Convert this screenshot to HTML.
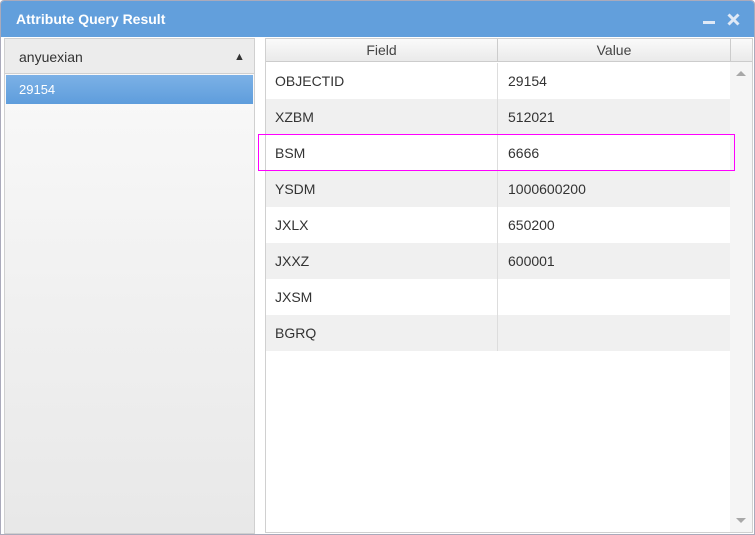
<html><head><style>
body{margin:0;width:755px;height:535px;overflow:hidden;background:#fff;font-family:"Liberation Sans",sans-serif;}
.win{position:absolute;left:0;top:0;width:753px;height:533px;border:1px solid #aab;border-radius:4px 4px 0 0;background:#fff;}
.title{position:absolute;left:0;top:0;width:753px;height:36px;background:#629fdc;border-radius:3px 3px 0 0;}
.title span{position:absolute;left:15px;top:10px;color:#fff;font-weight:bold;font-size:14px;}
.lp{position:absolute;left:3px;top:37px;width:249px;height:494px;border:1px solid #d0d0d0;background:linear-gradient(#fafafa,#e8e8e8);}
.lh{height:34px;background:#ececec;border-bottom:1px solid #d0d0d0;font-size:14px;color:#333;line-height:36px;padding-left:14px;position:relative}
.sel{margin:1px 0 0 1px;width:247px;height:29px;background:linear-gradient(#7cb1e6,#5e9ddc);color:#fff;font-size:13px;line-height:29px;padding-left:13px;box-sizing:border-box}
.rp{position:absolute;left:264px;top:37px;width:486px;height:493px;border:1px solid #d0d0d0;}
.hd{position:absolute;top:0;height:23px;background:linear-gradient(#fafafa,#eaeaea);border-bottom:1px solid #ccc;border-right:1px solid #ccc;font-size:14px;color:#444;text-align:center;line-height:23px;box-sizing:border-box}
.row{position:absolute;left:0;width:464px;height:36px;font-size:14px;color:#333;line-height:36px}
.row div{position:absolute;top:0;height:36px;padding-left:9px;box-sizing:border-box}
.c1{left:0;width:232px;border-right:1px solid #ddd}
.c2{left:232px;width:232px;padding-left:10px!important}
.g{background:#f0f0f0}
</style></head><body>
<div class="win">
<div class="title"><span>Attribute Query Result</span>
<div style="position:absolute;left:702px;top:20px;width:12px;height:3px;background:#dfe9f6"></div>
<svg style="position:absolute;left:726px;top:12px" width="13" height="13"><path d="M1.5 1.5L11.5 11.5M11.5 1.5L1.5 11.5" stroke="#dfe9f6" stroke-width="3"/></svg>
</div>
<div class="lp"><div class="lh">anyuexian<span style="position:absolute;left:229px;top:0;font-size:11px">&#9650;</span></div>
<div class="sel">29154</div></div>
<div class="rp">
<div class="hd" style="left:0;width:232px">Field</div>
<div class="hd" style="left:232px;width:233px">Value</div>
<div class="hd" style="left:465px;width:21px;border-right:none"></div>
<div style="position:absolute;left:464px;top:23px;width:22px;height:470px;background:#f5f5f5"></div>
<div style="position:absolute;left:470px;top:32px;width:0;height:0;border-left:5px solid transparent;border-right:5px solid transparent;border-bottom:5px solid #a8a8a8"></div>
<div style="position:absolute;left:470px;top:479px;width:0;height:0;border-left:5px solid transparent;border-right:5px solid transparent;border-top:5px solid #a8a8a8"></div>
<div class="row" style="top:24px"><div class="c1">OBJECTID</div><div class="c2">29154</div></div>
<div class="row g" style="top:60px"><div class="c1">XZBM</div><div class="c2">512021</div></div>
<div class="row" style="top:96px"><div class="c1">BSM</div><div class="c2">6666</div></div>
<div class="row g" style="top:132px"><div class="c1">YSDM</div><div class="c2">1000600200</div></div>
<div class="row" style="top:168px"><div class="c1">JXLX</div><div class="c2">650200</div></div>
<div class="row g" style="top:204px"><div class="c1">JXXZ</div><div class="c2">600001</div></div>
<div class="row" style="top:240px"><div class="c1">JXSM</div><div class="c2"></div></div>
<div class="row g" style="top:276px"><div class="c1">BGRQ</div><div class="c2"></div></div>
</div>
<div style="position:absolute;left:257px;top:133px;width:475px;height:35px;border:1px solid #f0f"></div>
</div>
</body></html>
